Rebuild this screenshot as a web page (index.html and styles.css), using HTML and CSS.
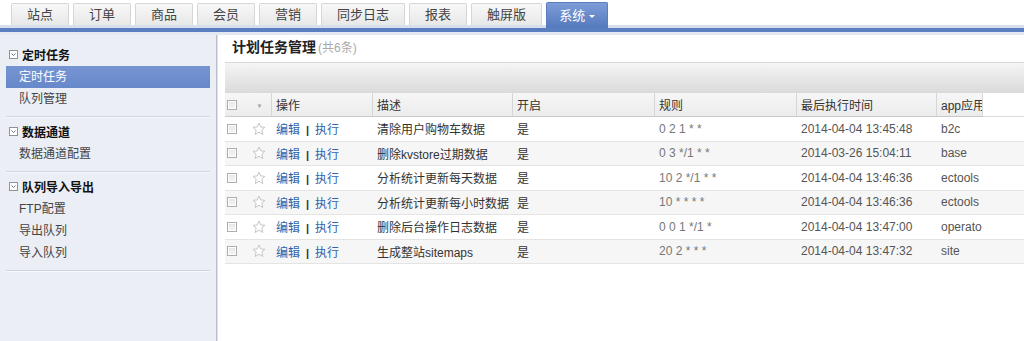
FILE: index.html
```html
<!DOCTYPE html>
<html lang="zh-CN">
<head>
<meta charset="utf-8">
<title>计划任务管理</title>
<link rel="stylesheet" href="styles.css">
</head>
<body>
<div class="topbar">
  <a class="tab">站点</a>
  <a class="tab">订单</a>
  <a class="tab">商品</a>
  <a class="tab">会员</a>
  <a class="tab">营销</a>
  <a class="tab">同步日志</a>
  <a class="tab">报表</a>
  <a class="tab">触屏版</a>
  <a class="tab active">系统<span class="caret"></span></a>
</div>
<div class="blueline"></div>
<div class="subline"></div>
<div class="layout">
  <aside class="sidebar">
    <div class="group">
      <div class="group-title"><svg class="fold" width="9" height="9" viewBox="0 0 9 9"><rect x="0.5" y="0.5" width="8" height="8" fill="#fff" stroke="#8d939e"/><path d="M2.5 3.5 L4.5 5.5 L6.5 3.5" fill="none" stroke="#6b717c"/></svg>定时任务</div>
      <a class="item selected">定时任务</a>
      <a class="item">队列管理</a>
    </div>
    <div class="group">
      <div class="group-title"><svg class="fold" width="9" height="9" viewBox="0 0 9 9"><rect x="0.5" y="0.5" width="8" height="8" fill="#fff" stroke="#8d939e"/><path d="M2.5 3.5 L4.5 5.5 L6.5 3.5" fill="none" stroke="#6b717c"/></svg>数据通道</div>
      <a class="item">数据通道配置</a>
    </div>
    <div class="group">
      <div class="group-title"><svg class="fold" width="9" height="9" viewBox="0 0 9 9"><rect x="0.5" y="0.5" width="8" height="8" fill="#fff" stroke="#8d939e"/><path d="M2.5 3.5 L4.5 5.5 L6.5 3.5" fill="none" stroke="#6b717c"/></svg>队列导入导出</div>
      <a class="item">FTP配置</a>
      <a class="item">导出队列</a>
      <a class="item">导入队列</a>
    </div>
  </aside>
  <main class="main">
    <div class="title">计划任务管理<span class="count">(共6条)</span></div>
    <div class="toolbar"></div>
    <table class="grid">
      <colgroup>
        <col class="c-check"><col class="c-star"><col class="c-op"><col class="c-desc"><col class="c-on"><col class="c-rule"><col class="c-time"><col class="c-app"><col>
      </colgroup>
      <thead>
        <tr>
          <th class="cell-check"><span class="cb"></span></th>
          <th class="cell-star div"><span class="sort">▼</span></th>
          <th class="div">操作</th>
          <th class="div">描述</th>
          <th class="div">开启</th>
          <th class="div">规则</th>
          <th class="div">最后执行时间</th>
          <th class="div clip">app应用</th>
          <th class="filler"></th>
        </tr>
      </thead>
      <tbody>
        <tr>
          <td class="cell-check"><span class="cb"></span></td>
          <td class="cell-star"><svg class="star" width="14" height="14" viewBox="0 0 14 14"><polygon points="7,1 8.8,5 13,5.3 9.8,8.1 10.8,12.5 7,10.2 3.2,12.5 4.2,8.1 1,5.3 5.2,5" fill="#fff" stroke="#c6c6c6"/></svg></td>
          <td><a class="lnk">编辑</a><span class="bar">|</span><a class="lnk">执行</a></td>
          <td>清除用户购物车数据</td>
          <td>是</td>
          <td class="rule">0 2 1 * *</td>
          <td class="time">2014-04-04 13:45:48</td>
          <td class="time">b2c</td>
          <td></td>
        </tr>
        <tr>
          <td class="cell-check"><span class="cb"></span></td>
          <td class="cell-star"><svg class="star" width="14" height="14" viewBox="0 0 14 14"><polygon points="7,1 8.8,5 13,5.3 9.8,8.1 10.8,12.5 7,10.2 3.2,12.5 4.2,8.1 1,5.3 5.2,5" fill="#fff" stroke="#c6c6c6"/></svg></td>
          <td><a class="lnk">编辑</a><span class="bar">|</span><a class="lnk">执行</a></td>
          <td>删除kvstore过期数据</td>
          <td>是</td>
          <td class="rule">0 3 */1 * *</td>
          <td class="time">2014-03-26 15:04:11</td>
          <td class="time">base</td>
          <td></td>
        </tr>
        <tr>
          <td class="cell-check"><span class="cb"></span></td>
          <td class="cell-star"><svg class="star" width="14" height="14" viewBox="0 0 14 14"><polygon points="7,1 8.8,5 13,5.3 9.8,8.1 10.8,12.5 7,10.2 3.2,12.5 4.2,8.1 1,5.3 5.2,5" fill="#fff" stroke="#c6c6c6"/></svg></td>
          <td><a class="lnk">编辑</a><span class="bar">|</span><a class="lnk">执行</a></td>
          <td>分析统计更新每天数据</td>
          <td>是</td>
          <td class="rule">10 2 */1 * *</td>
          <td class="time">2014-04-04 13:46:36</td>
          <td class="time">ectools</td>
          <td></td>
        </tr>
        <tr>
          <td class="cell-check"><span class="cb"></span></td>
          <td class="cell-star"><svg class="star" width="14" height="14" viewBox="0 0 14 14"><polygon points="7,1 8.8,5 13,5.3 9.8,8.1 10.8,12.5 7,10.2 3.2,12.5 4.2,8.1 1,5.3 5.2,5" fill="#fff" stroke="#c6c6c6"/></svg></td>
          <td><a class="lnk">编辑</a><span class="bar">|</span><a class="lnk">执行</a></td>
          <td>分析统计更新每小时数据</td>
          <td>是</td>
          <td class="rule">10 * * * *</td>
          <td class="time">2014-04-04 13:46:36</td>
          <td class="time">ectools</td>
          <td></td>
        </tr>
        <tr>
          <td class="cell-check"><span class="cb"></span></td>
          <td class="cell-star"><svg class="star" width="14" height="14" viewBox="0 0 14 14"><polygon points="7,1 8.8,5 13,5.3 9.8,8.1 10.8,12.5 7,10.2 3.2,12.5 4.2,8.1 1,5.3 5.2,5" fill="#fff" stroke="#c6c6c6"/></svg></td>
          <td><a class="lnk">编辑</a><span class="bar">|</span><a class="lnk">执行</a></td>
          <td>删除后台操作日志数据</td>
          <td>是</td>
          <td class="rule">0 0 1 */1 *</td>
          <td class="time">2014-04-04 13:47:00</td>
          <td class="time">operato</td>
          <td></td>
        </tr>
        <tr>
          <td class="cell-check"><span class="cb"></span></td>
          <td class="cell-star"><svg class="star" width="14" height="14" viewBox="0 0 14 14"><polygon points="7,1 8.8,5 13,5.3 9.8,8.1 10.8,12.5 7,10.2 3.2,12.5 4.2,8.1 1,5.3 5.2,5" fill="#fff" stroke="#c6c6c6"/></svg></td>
          <td><a class="lnk">编辑</a><span class="bar">|</span><a class="lnk">执行</a></td>
          <td>生成整站sitemaps</td>
          <td>是</td>
          <td class="rule">20 2 * * *</td>
          <td class="time">2014-04-04 13:47:32</td>
          <td class="time">site</td>
          <td></td>
        </tr>
      </tbody>
    </table>
  </main>
</div>
</body>
</html>
```

FILE: styles.css
```css
* { box-sizing: border-box; }
html, body { margin: 0; padding: 0; }
body {
  width: 1024px;
  height: 341px;
  overflow: hidden;
  background: #fff;
  font-family: "Liberation Sans", "Noto Sans CJK SC", sans-serif;
  font-size: 12px;
  color: #333;
}
a { text-decoration: none; cursor: pointer; }

/* top tabs */
.topbar {
  display: flex;
  gap: 4px;
  height: 28px;
  padding: 3px 0 0 11px;
  background: linear-gradient(#fff 0, #fff 25px, #d9dfea 25px, #d9dfea 28px);
}
.tab {
  height: 22px;
  line-height: 21px;
  padding: 0 15px;
  border: 1px solid #d6d6d6;
  border-bottom: none;
  border-radius: 2px 2px 0 0;
  background: linear-gradient(#f8f8f8, #e8e8e8);
  font-size: 13px;
  color: #444;
  white-space: nowrap;
}
.tab.active {
  height: 26px;
  margin-top: -1px;
  line-height: 25px;
  padding: 0 12px;
  border-color: #5a7dbf;
  background: linear-gradient(#7d9dd8, #5479bd);
  color: #fff;
  display: flex;
  align-items: center;
  gap: 4px;
}
.caret {
  width: 0;
  height: 0;
  border-left: 3px solid transparent;
  border-right: 3px solid transparent;
  border-top: 3px solid #fff;
  margin-top: 1px;
}
.blueline { height: 4px; background: #5b7ec0; }
.subline { height: 3px; background: #e4e8f0; }

/* layout */
.layout {
  display: flex;
  height: 306px;
}
.sidebar {
  width: 217px;
  flex: none;
  background: #ebeef5;
  border-right: 1px solid #b9bfca;
  box-shadow: 1px 0 0 #dde1e8;
  padding-top: 5px;
}
.group {
  margin: 0 6px;
  padding: 3px 0 6px;
  border-bottom: 1px solid #d0d5df;
  box-shadow: 0 1px 0 #f7f8fb;
}
.group-title {
  height: 22px;
  margin-bottom: 1px;
  display: flex;
  align-items: center;
  gap: 4px;
  padding-left: 3px;
  font-weight: bold;
  color: #111;
  font-size: 12px;
}
.fold { flex: none; }
.item {
  display: block;
  height: 22px;
  line-height: 22px;
  padding-left: 13px;
  color: #444;
}
.item.selected {
  background: linear-gradient(#7594d2, #6788c9);
  color: #fff;
}

/* main */
.main {
  flex: 1;
  min-width: 0;
  padding-left: 8px;
}
.title {
  height: 27px;
  line-height: 25px;
  padding-left: 7px;
  font-size: 14px;
  font-weight: bold;
  color: #222;
}
.count {
  font-size: 12px;
  font-weight: normal;
  color: #a9a9a9;
  margin-left: 2px;
}
.toolbar {
  height: 31px;
  border-top: 1px solid #d8d8d8;
  background: linear-gradient(#f5f5f5, #dadada);
}

/* grid */
.grid {
  width: 100%;
  table-layout: fixed;
  border-collapse: separate;
  border-spacing: 0;
}
.c-check { width: 23px; }
.c-star { width: 24px; }
.c-op { width: 101px; }
.c-desc { width: 140px; }
.c-on { width: 142px; }
.c-rule { width: 142px; }
.c-time { width: 140px; }
.c-app { width: 46px; }

.grid th {
  height: 24px;
  padding: 0 4px;
  text-align: left;
  font-weight: normal;
  color: #333;
  background: linear-gradient(#f6f6f6, #ececec);
  border-bottom: 1px solid #c9c9c9;
  white-space: nowrap;
  overflow: hidden;
}
.grid th.div { border-right: 1px solid #d6d6d6; }
.grid th.filler { background: #fff; border-bottom-color: #dcdcdc; }
.grid th.clip { text-overflow: clip; }

.grid td {
  height: 24.5px;
  padding: 0 4px;
  border-bottom: 1px solid #e4e4e4;
  white-space: nowrap;
  overflow: hidden;
}
.grid tbody tr:nth-child(even) td { background: #f6f6f6; }

.grid .cell-check { padding: 0 0 0 2px; }
.grid .cell-star { padding: 0; text-align: center; }
.cb {
  display: block;
  width: 10px;
  height: 10px;
  border: 1px solid #adadad;
  background: linear-gradient(#e6e6e6, #f6f6f6);
  box-shadow: inset 0 0 0 1px #fff;
}
.sort { font-size: 6px; color: #a0a0a0; position: relative; top: -1px; }
.star { display: block; margin: 0 auto 0 4px; }

.lnk { color: #2f62a9; }
.bar { color: #333; margin: 0 6px; font-weight: bold; font-size: 11px; }
.rule { color: #777; }
.time { color: #555; }
```
